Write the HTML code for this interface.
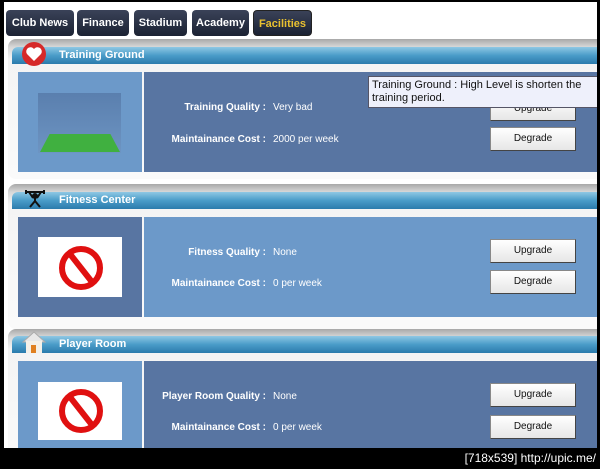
<!DOCTYPE html>
<html><head><style>
*{margin:0;padding:0;box-sizing:border-box}
body{width:600px;height:469px;background:#000;position:relative;overflow:hidden;font-family:"Liberation Sans",Tahoma,sans-serif}
#page{position:absolute;left:4px;top:2px;width:593px;height:446px;background:#fff;overflow:hidden}
.tab{position:absolute;top:8px;height:26px;background:linear-gradient(#3a4258,#1b2233);border-radius:4px;color:#fff;font-weight:bold;font-size:11px;line-height:26px;text-align:center}
.frame{position:absolute;left:4px;width:600px;background:linear-gradient(#a8a8a8,#d8d8d8 8px,#f4f4f4 20px,#fafafa);border-radius:8px}
.hdr{position:absolute;left:8px;width:590px;height:17px;background:linear-gradient(#8fc8e4,#4a9cc8 50%,#2b7bac);border-radius:6px 0 0 0;color:#fff;font-weight:bold;font-size:11px;line-height:17px;padding-left:47px}
.lc,.rc{position:absolute}
.dark{background:#5875a2}.light{background:#6c99c9}
.lab{position:absolute;color:#fff;font-size:10px;font-weight:bold;text-align:right;width:250px}
.val{position:absolute;color:#fff;font-size:10px}
.btn{position:absolute;width:86px;height:24px;background:linear-gradient(#fff,#e6e6e6);border:1px solid #888;border-right-color:#444;border-bottom-color:#444;font-size:10px;text-align:center;line-height:22px;color:#111}
.wbox{position:absolute;background:#fff}
</style></head><body>
<div id="page">
<div class="tab" style="left:2px;width:68px">Club News</div>
<div class="tab" style="left:73px;width:52px">Finance</div>
<div class="tab" style="left:130px;width:53px">Stadium</div>
<div class="tab" style="left:188px;width:57px">Academy</div>
<div class="tab" style="left:249px;width:59px;color:#e8c030;border:1px solid #222">Facilities</div>

<div class="frame" style="top:37px;height:140px"></div>
<div class="hdr" style="top:45px">Training Ground</div>
<svg style="position:absolute;left:17px;top:39px" width="26" height="26"><circle cx="13" cy="13" r="12" fill="#d62a2a"/><path d="M13 20 L6 13 A4 4 0 0 1 13 8 A4 4 0 0 1 20 13 Z" fill="#fff"/></svg>
<div class="lc light" style="left:14px;top:70px;width:124px;height:100px"></div>
<div class="rc dark" style="left:140px;top:70px;width:455px;height:100px"></div>
<div style="position:absolute;left:34px;top:91px;width:83px;height:60px;background:linear-gradient(#5a7fae,#6d94c2)"></div>
<div style="position:absolute;left:36px;top:132px;width:80px;height:18px;background:#40b040;clip-path:polygon(12% 0,88% 0,100% 100%,0 100%)"></div>
<div class="lab" style="left:12px;top:100px">Training Quality :</div><div class="val" style="left:269px;top:100px">Very bad</div>
<div class="lab" style="left:12px;top:132px">Maintainance Cost :</div><div class="val" style="left:269px;top:132px">2000 per week</div>
<div class="btn" style="left:486px;top:95px">Upgrade</div>
<div class="btn" style="left:486px;top:125px">Degrade</div>
<div style="position:absolute;left:364px;top:74px;width:232px;height:32px;background:#eef0fb;border:1px solid #556;font-size:11px;line-height:13px;padding:2px 3px;color:#111">Training Ground : High Level is shorten the training period.</div>

<div class="frame" style="top:182px;height:145px"></div>
<div class="hdr" style="top:190px">Fitness Center</div>
<svg style="position:absolute;left:20px;top:186px" width="22" height="20" fill="none" stroke="#111" stroke-width="2"><path d="M2 2 L2 6 M20 2 L20 6 M2 4 L20 4"/><circle cx="11" cy="8" r="2" fill="#111"/><path d="M5 4 L9 10 M17 4 L13 10 M11 10 L11 13 L6 19 M11 13 L16 19"/></svg>
<div class="lc dark" style="left:14px;top:215px;width:124px;height:100px"></div>
<div class="rc light" style="left:140px;top:215px;width:455px;height:100px"></div>
<div class="wbox" style="left:34px;top:235px;width:84px;height:60px"></div>
<svg style="position:absolute;left:54px;top:243px" width="46" height="46"><circle cx="23" cy="23" r="19" fill="none" stroke="#e01010" stroke-width="6"/><line x1="12" y1="9" x2="34" y2="37" stroke="#e01010" stroke-width="6"/></svg>
<div class="lab" style="left:12px;top:245px">Fitness Quality :</div><div class="val" style="left:269px;top:245px">None</div>
<div class="lab" style="left:12px;top:276px">Maintainance Cost :</div><div class="val" style="left:269px;top:276px">0 per week</div>
<div class="btn" style="left:486px;top:237px">Upgrade</div>
<div class="btn" style="left:486px;top:268px">Degrade</div>

<div class="frame" style="top:327px;height:140px"></div>
<div class="hdr" style="top:334px">Player Room</div>
<svg style="position:absolute;left:17px;top:328px" width="26" height="24"><path d="M2 12 L13 2 L24 12 Z" fill="#e8e8e8" stroke="#aaa"/><rect x="5" y="11" width="16" height="12" fill="#f4f0e8"/><rect x="10" y="15" width="5" height="8" fill="#e08020"/></svg>
<div class="lc light" style="left:14px;top:359px;width:124px;height:90px"></div>
<div class="rc dark" style="left:140px;top:359px;width:455px;height:90px"></div>
<div class="wbox" style="left:34px;top:380px;width:84px;height:58px"></div>
<svg style="position:absolute;left:54px;top:386px" width="46" height="46"><circle cx="23" cy="23" r="19" fill="none" stroke="#e01010" stroke-width="6"/><line x1="12" y1="9" x2="34" y2="37" stroke="#e01010" stroke-width="6"/></svg>
<div class="lab" style="left:12px;top:389px">Player Room Quality :</div><div class="val" style="left:269px;top:389px">None</div>
<div class="lab" style="left:12px;top:420px">Maintainance Cost :</div><div class="val" style="left:269px;top:420px">0 per week</div>
<div class="btn" style="left:486px;top:381px">Upgrade</div>
<div class="btn" style="left:486px;top:413px">Degrade</div>
</div>
<div style="position:absolute;right:4px;top:451px;color:#fff;font-size:12px;font-family:'Liberation Sans',sans-serif">[718x539] http://upic.me/</div>
</body></html>
